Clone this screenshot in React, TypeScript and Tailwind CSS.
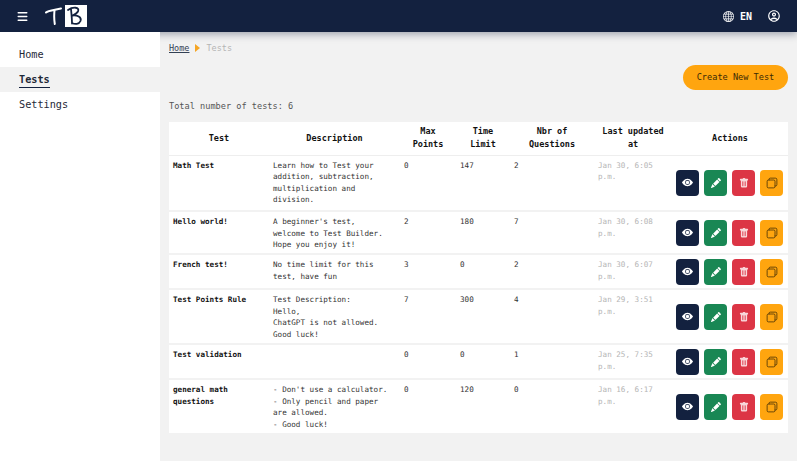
import { Menu } from 'lucide-react'
import { BsEyeFill, BsGlobe, BsPencilFill, BsTrashFill } from 'react-icons/bs'
import { IoCopyOutline } from 'react-icons/io5'
import { MdOutlineAccountCircle } from 'react-icons/md'

const tests = [
  { name: 'Math Test', desc: ['Learn how to Test your addition, subtraction, multiplication and division.'], points: 0, time: 147, questions: 2, updated: 'Jan 30, 6:05 p.m.', h: 'h-[56px]' },
  { name: 'Hello world!', desc: ["A beginner's test, welcome to Test Builder. Hope you enjoy it!"], points: 2, time: 180, questions: 7, updated: 'Jan 30, 6:08 p.m.', h: 'h-[43px]' },
  { name: 'French test!', desc: ['No time limit for this test, have fun'], points: 3, time: 0, questions: 2, updated: 'Jan 30, 6:07 p.m.', h: 'h-[35px]' },
  { name: 'Test Points Rule', desc: ['Test Description:', 'Hello,', 'ChatGPT is not allowed.', 'Good luck!'], points: 7, time: 300, questions: 4, updated: 'Jan 29, 3:51 p.m.', h: 'h-[55px]' },
  { name: 'Test validation', desc: [], points: 0, time: 0, questions: 1, updated: 'Jan 25, 7:35 p.m.', h: 'h-[35px]' },
  { name: 'general math questions', desc: ["- Don't use a calculator.", '- Only pencil and paper are allowed.', '- Good luck!'], points: 0, time: 120, questions: 0, updated: 'Jan 16, 6:17 p.m.', h: 'h-[54px]' },
]

function Logo() {
  return (
    <svg width="42" height="22" viewBox="0 0 42 22" fill="none" aria-label="TB logo">
      <path d="M1 7.5C3 5.5 10 5 16 3.5M9.5 5.5C9 10 9 14 9.8 19" stroke="white" strokeWidth="2" strokeLinecap="round" />
      <rect x="20" y="0" width="22" height="22" fill="white" />
      <path d="M26 4C26.5 9 27 14 27 18.5M23 5C28 1.5 35 2 33 6.5C32 8.5 30 9.5 27.5 10.5C32 10 37 12 35.5 16C34 19.5 30 19.5 27 18" stroke="#13213f" strokeWidth="1.8" strokeLinecap="round" strokeLinejoin="round" />
    </svg>
  )
}

function Actions() {
  return (
    <div className="flex gap-[5px]">
      <button className="flex h-[26px] w-[23px] items-center justify-center rounded-[4px] bg-[#13213f] text-white">
        <BsEyeFill size={11} />
      </button>
      <button className="flex h-[26px] w-[23px] items-center justify-center rounded-[4px] bg-[#198754] text-white">
        <BsPencilFill size={10} />
      </button>
      <button className="flex h-[26px] w-[23px] items-center justify-center rounded-[4px] bg-[#dc3545] text-[#f8d7da]">
        <BsTrashFill size={10} />
      </button>
      <button className="flex h-[26px] w-[23px] items-center justify-center rounded-[4px] bg-[#ffa50f] text-[#3b2a05]">
        <IoCopyOutline size={12} className="-scale-x-100" />
      </button>
    </div>
  )
}

export default function App() {
  return (
    <div className="flex h-[461px] w-[797px] flex-col overflow-hidden bg-[#f2f2f2] font-['DejaVu_Sans_Mono',monospace] text-[#1f2937]">
      <header className="z-10 flex h-[32px] shrink-0 items-center justify-between bg-[#13213f] pl-[16px] pr-[16px] text-white shadow-[0_2px_8px_rgba(19,33,63,0.4)]">
        <div className="flex items-center gap-[16px]">
          <Menu size={13} strokeWidth={2.5} />
          <Logo />
        </div>
        <div className="flex items-center">
          <BsGlobe size={11} />
          <span className="ml-[6px] text-[10px] font-bold">EN</span>
          <MdOutlineAccountCircle size={14} className="ml-[15px]" />
        </div>
      </header>
      <div className="flex min-h-0 flex-1">
        <nav className="relative z-20 w-[160px] shrink-0 bg-white pt-[10px] text-[10.2px]">
          <div className="flex h-[25px] items-center pl-[19px]">Home</div>
          <div className="flex h-[25px] items-center bg-[#f2f2f2] pl-[19px] pt-[2px]">
            <span className="border-b border-[#13213f] font-bold leading-[14px]">Tests</span>
          </div>
          <div className="flex h-[25px] items-center pl-[19px]">Settings</div>
        </nav>
        <main className="min-w-0 flex-1 pl-[9px] pr-[9px]">
          <div className="flex h-[30px] items-center pt-[2px] text-[8.5px]">
            <span className="text-[#334155] underline">Home</span>
            <span className="mx-[6px] h-0 w-0 border-y-[4px] border-l-[5px] border-y-transparent border-l-[#f5a524]" />
            <span className="text-[#b5b5b5]">Tests</span>
          </div>
          <div className="flex justify-end pt-[3px]">
            <button className="h-[25px] w-[105px] rounded-full bg-[#ffa50f] text-[8.6px] text-[#3b2a05]">Create New Test</button>
          </div>
          <p className="mt-[10px] h-[22px] text-[8.6px] leading-[12px] text-[#555]">Total number of tests: 6</p>
          <table className="w-[619px] table-fixed border-collapse bg-white text-[7.6px] leading-[11.6px] text-[#333]">
            <colgroup>
              <col className="w-[100px]" />
              <col className="w-[131px]" />
              <col className="w-[56px]" />
              <col className="w-[54px]" />
              <col className="w-[84px]" />
              <col className="w-[78px]" />
              <col className="w-[116px]" />
            </colgroup>
            <thead>
              <tr className="h-[33px] border-b border-[#eeeeee] text-center text-[8.5px] leading-[13px] font-bold text-[#111]">
                <th className="font-bold">Test</th>
                <th className="font-bold">Description</th>
                <th className="px-[10px] font-bold">Max Points</th>
                <th className="px-[10px] font-bold">Time Limit</th>
                <th className="px-[10px] font-bold">Nbr of Questions</th>
                <th className="px-[4px] font-bold">Last updated at</th>
                <th className="font-bold">Actions</th>
              </tr>
            </thead>
            <tbody>
              {tests.map((t) => (
                <tr key={t.name} className={`${t.h} border-b-2 border-[#f2f2f2] last:border-b-0`}>
                  <td className="px-[4px] pt-[4px] align-top font-bold text-[#111]">{t.name}</td>
                  <td className="pr-[12px] pl-[4px] pt-[4px] align-top">
                    {t.desc.map((line) => (
                      <div key={line}>{line}</div>
                    ))}
                  </td>
                  <td className="px-[4px] pt-[4px] align-top">{t.points}</td>
                  <td className="px-[4px] pt-[4px] align-top">{t.time}</td>
                  <td className="px-[4px] pt-[4px] align-top">{t.questions}</td>
                  <td className="px-[4px] pt-[4px] align-top text-[#b5b5b5]">{t.updated}</td>
                  <td className="px-[4px] align-middle">
                    <Actions />
                  </td>
                </tr>
              ))}
            </tbody>
          </table>
        </main>
      </div>
    </div>
  )
}
